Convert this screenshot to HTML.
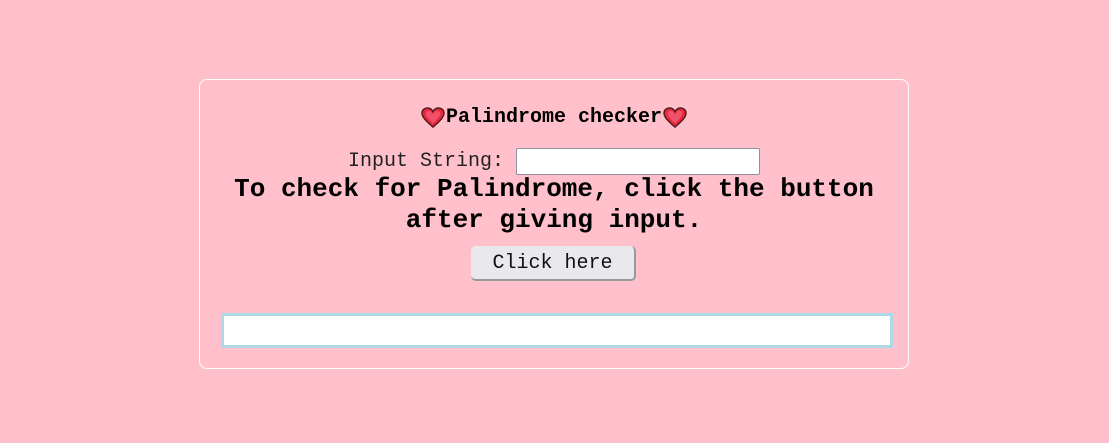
<!DOCTYPE html>
<html><head><style>
body{margin:0;width:1109px;height:443px;background:#ffc0cb;position:relative;overflow:hidden;font-family:"Liberation Mono",monospace;color:#000}
.card{position:absolute;left:199px;top:79px;width:708px;height:288px;border:1px solid #fff;border-radius:8px}
.a{position:absolute;white-space:nowrap}
</style></head><body>
<div class="card"></div>
<div class="a" style="left:420px;top:105px;font-size:20px;font-weight:bold;line-height:26px;display:flex;align-items:center">
<svg width="26" height="22" viewBox="0 0 26 24"><path d="M13 22 C5 15 1 11 1 6.5 C1 3 4 1 7 1 C10 1 12 3 13 5 C14 3 16 1 19 1 C22 1 25 3 25 6.5 C25 11 21 15 13 22Z" fill="#e8263c" stroke="#4a1a1a" stroke-width="1.5"/><path d="M13 18 C8 13 5 10 5 7 C5 5 7 4 8.5 4 C10.5 4 12 6 13 8 C14 6 15.5 4 17.5 4 C19 4 21 5 21 7 C21 10 18 13 13 18Z" fill="#f0506a"/></svg>Palindrome checker<svg width="26" height="22" viewBox="0 0 26 24"><path d="M13 22 C5 15 1 11 1 6.5 C1 3 4 1 7 1 C10 1 12 3 13 5 C14 3 16 1 19 1 C22 1 25 3 25 6.5 C25 11 21 15 13 22Z" fill="#e8263c" stroke="#4a1a1a" stroke-width="1.5"/><path d="M13 18 C8 13 5 10 5 7 C5 5 7 4 8.5 4 C10.5 4 12 6 13 8 C14 6 15.5 4 17.5 4 C19 4 21 5 21 7 C21 10 18 13 13 18Z" fill="#f0506a"/></svg></div>
<div class="a" style="left:348px;top:149px;font-size:20px;line-height:26px;color:#222">Input String:</div>
<div class="a" style="left:516px;top:148px;width:242px;height:25px;background:#fff;border:1px solid #8f8f9d;border-radius:2px"></div>
<div class="a" style="left:200px;width:708px;top:174px;font-size:26px;font-weight:bold;line-height:31px;text-align:center">To check for Palindrome, click the button<br>after giving input.</div>
<div class="a" style="left:471px;top:246px;width:163px;height:33px;background:#e9e9ed;border-radius:5px;border-right:2px solid #999;border-bottom:2px solid #999;font-size:20px;line-height:35px;text-align:center;color:#111">Click here</div>
<div class="a" style="left:221px;top:313px;width:666px;height:29px;background:#fff;border:3px solid #add8e6"></div>
</body></html>
